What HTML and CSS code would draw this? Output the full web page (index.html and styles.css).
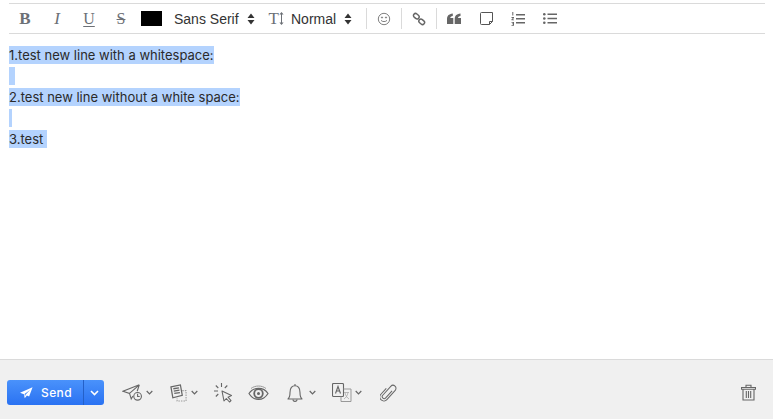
FILE: index.html
```html
<!DOCTYPE html>
<html lang="en">
<head>
    <meta charset="UTF-8">
    <meta name="viewport" content="width=device-width, initial-scale=1.0">
    <title>Compose</title>
    <link rel="stylesheet" href="styles.css">
</head>
<body>
    <div class="composer">
        <div class="toolbar">
            <span class="tool fmt bold">B</span>
            <span class="tool fmt italic">I</span>
            <span class="tool fmt underline">U</span>
            <span class="tool fmt strike">S</span>
            <span class="swatch"></span>
            <span class="picker font-picker">Sans Serif</span>
            <svg class="updown" width="8" height="12" viewBox="0 0 8 12"><path d="M4 0.5 7.5 5H.5zM4 11.500.5 7h7z"/></svg>
            <span class="size-icon">T<svg width="5" height="13" viewBox="0 0 5 13"><path d="M2.500 0 4.600 2.500H3V10.500H4.600L2.500 13 .4 10.500H2V2.500H.4z"/></svg></span>
            <span class="picker size-picker">Normal</span>
            <svg class="updown" width="8" height="12" viewBox="0 0 8 12"><path d="M4 0.5 7.5 5H.5zM4 11.500.5 7h7z"/></svg>

            <span class="sep first-sep"></span>
            <svg class="icon" width="14" height="14" viewBox="0 0 14 14" fill="none" stroke="#808080" stroke-width="1"><circle cx="7" cy="7" r="5.700"/><circle cx="5" cy="5.500" r=".6" fill="#777"/><circle cx="9" cy="5.500" r=".6" fill="#777"/><path d="M4 8.300c.8 1.700 5.200 1.700 6 0"/></svg>
            <span class="sep"></span>
            <svg class="icon" width="14" height="14" viewBox="-1 -1 16 16" fill="none" stroke="#666" stroke-width="1.700"><rect x=".4" y="1.400" width="7" height="4.800" rx="2.400" transform="rotate(40 3.900 3.800)"/><rect x="6.600" y="7.800" width="7" height="4.800" rx="2.400" transform="rotate(40 10.100 10.200)"/></svg>
            <span class="sep"></span>
            <svg class="icon" width="14" height="12" viewBox="0 0 14 12" fill="#666"><path d="M0 11V6.500C0 3 1.500 1.200 5.800.6V3C4.200 3.200 3.300 4 3.300 5H6.300V11zM7.700 11V6.500C7.700 3 9.200 1.200 13.500.6V3C11.900 3.200 11 4 11 5H14V11z"/></svg>
            <svg class="icon note" width="13" height="13" viewBox="0 0 13 13" fill="none" stroke="#555" stroke-width="1"><path d="M1.500.5H12.500V9.500L9.500 12.500H1.500A1 1 0 0 1 .5 11.500V1.500A1 1 0 0 1 1.500.5ZM12.500 9.500H9.500V12.500"/></svg>
            <svg class="icon list" width="14" height="14" viewBox="0 0 14 14" fill="#666"><path d="M5 2h9V3.500H5zM5 6h9V7.500H5zM5 10h9V11.500H5z"/><path d="M1.300 0h1v3.500h-1zM.5 5h2.500v1L1.500 7.500H3v.8H.5v-1L2 6H.5zM.5 10H3v3.800H.5V13H2v-.7H1v-.7h1v-.8H.5z"/></svg>
            <svg class="icon list" width="14" height="11" viewBox="0 0 14 11" fill="#666"><circle cx="1.300" cy="1.300" r="1.300"/><circle cx="1.300" cy="5.500" r="1.300"/><circle cx="1.300" cy="9.700" r="1.300"/><path d="M4.500.5H14V2H4.500zM4.500 4.700H14V6.200H4.500zM4.500 8.900H14V10.400H4.500z"/></svg>
        </div>

        <div class="editor">
            <span class="line">1.test new line with a whitespace:</span>
            <span class="line blank-wide"></span>
            <span class="line">2.test new line without a white space:</span>
            <span class="line blank-thin"></span>
            <span class="line">3.test&nbsp;</span>
        </div>

        <div class="footer">
            <div class="send-button">
                <span class="send-main">
                    <svg width="13" height="12" viewBox="0 0 15 13" fill="#fff"><path d="M14.500 0 0 6.300 4.500 8 5.500 12.500 8 9.300 10.500 10.500zM5.300 7.700 11.500 3 6.300 8.500 5.800 10.200z"/></svg>
                    Send
                </span>
                <span class="send-arrow">
                    <svg width="9" height="6" viewBox="0 0 9 6" fill="none" stroke="#fff" stroke-width="1.600"><path d="M1 1 4.500 4.500 8 1"/></svg>
                </span>
            </div>

            <div class="actions">
                <span class="action send-later">
                    <svg width="21" height="17" viewBox="0 0 24 20" fill="none" stroke="#666" stroke-width="1.300"><path d="M20 1 .8 8.500 8.500 11 10.500 17.500 12.500 14M20 1 8.500 11M20 1 17.500 8.500"/><circle cx="18" cy="14.500" r="4.500"/><path d="M18 11.500v3.200h2.500"/></svg>
                    <svg class="caret" width="7" height="5" viewBox="0 0 7 5"><path d="M.7 1 3.500 3.800 6.300 1"/></svg>
                </span>
                <span class="action templates">
                    <svg width="17" height="18" viewBox="0 0 18 19" fill="none" stroke="#666" stroke-width="1.300"><path d="M1 3 11 1 13 12 3 14.500z"/><path d="M3.500 5 9.500 4M4 7.500l6-1M4.500 10l6-1" stroke-width="1.400"/><path d="M13 7h4v11H7.500v-3" stroke="#999" stroke-width="1.100" stroke-dasharray="1.500 1.200"/></svg>
                    <svg class="caret" width="7" height="5" viewBox="0 0 7 5"><path d="M.7 1 3.500 3.800 6.300 1"/></svg>
                </span>
                <span class="action click-track">
                    <svg width="19" height="20" viewBox="0 0 19 20" fill="none" stroke="#666" stroke-width="1.100"><path d="M8 8 10 18 12.300 15.500 15.500 19 17 17.500 14 14.200 17.500 12.500z" stroke-linejoin="round"/><path d="M7.500 0V4M1.800 2.500 4.300 5M0 8H4M1.800 13.500 4.300 11M13.300 2.500 10.800 5"/></svg>
                </span>
                <span class="action read-track">
                    <svg width="21" height="16" viewBox="0 0 21 16" fill="none" stroke="#666"><path d="M1 8.500C3.500 4.500 7 3.300 10.500 3.300S17.500 4.500 20 8.500C17.500 12.500 14 14.500 10.500 14.500S3.500 12.500 1 8.500Z" stroke-width="1.200"/><circle cx="10.500" cy="8.500" r="4.300" stroke-width="1.800"/><circle cx="10.500" cy="8.500" r="1.500" fill="#666" stroke="none"/><path d="M3 3.500C7 .2 14 .2 18 3.500" stroke="#999" stroke-width="1"/></svg>
                </span>
                <span class="action reminder">
                    <svg width="16" height="20" viewBox="0 0 16 20" fill="none" stroke="#666" stroke-width="1.100"><path d="M1 16c1.700-1.500 2-3 2-6.500C3 5 5 2.800 8 2.800S13 5 13 9.500C13 13 13.300 14.500 15 16z" stroke-linejoin="round"/><path d="M8 1V2.800M6 16.500C6 19 10 19 10 16.500"/></svg>
                    <svg class="caret" width="7" height="5" viewBox="0 0 7 5"><path d="M.7 1 3.500 3.800 6.300 1"/></svg>
                </span>
                <span class="action translate">
                    <svg width="20" height="20" viewBox="0 0 20 20" fill="none" stroke="#666" stroke-width="1.100"><rect x=".5" y=".5" width="11" height="13" rx="1"/><path d="M3.500 10.500 6 3.500 8.500 10.500M4.500 8H7.500"/><path d="M11.500 6H19V18.500H9V13.500" stroke="#999" stroke-width="1"/><path d="M12 9.500H17M13 9.500C13.500 13 15.500 15 17 16M16 9.500C15.500 13 13.500 15 12 16" stroke="#aaa" stroke-width=".8"/></svg>
                    <svg class="caret" width="7" height="5" viewBox="0 0 7 5"><path d="M.7 1 3.500 3.800 6.300 1"/></svg>
                </span>
                <span class="action attach">
                    <svg width="17" height="18" viewBox="-8.500 -9 17 18" fill="none" stroke="#666" stroke-width="1"><path transform="rotate(42)" d="M1.200 -4V5.500A2 2 0 0 1 -2.800 5.500V-6.500A3 3 0 0 1 3.200 -6.500V6A4 4 0 0 1 -4.800 6V-2"/></svg>
                </span>
            </div>

            <svg class="trash" width="15" height="17" viewBox="0 0 15 17" fill="none" stroke="#666"><path d="M.5 3.500H14.500V5.300H.5zM5 3.500V1.200H10V3.500M2 5.300V16H13V5.300" stroke-width="1.100"/><path d="M5.300 7V14M7.500 7V14M9.700 7V14" stroke-width="1.100"/></svg>
        </div>
    </div>
</body>
</html>
```

FILE: styles.css
```css
html, body {
    margin: 0;
    padding: 0;
    height: 100%;
    background: #FFFFFF;
}

.composer {
    display: flex;
    flex-direction: column;
    height: 419px;
    overflow: hidden;
}

.toolbar {
    display: flex;
    align-items: center;
    height: 29px;
    margin: 3px 8px 0 9px;
    border-top: 1px solid #DADADA;
    border-bottom: 1px solid #DADADA;
}

.tool {
    width: 32px;
    text-align: center;
    flex: none;
    color: #6C7076;
    font-family: "Liberation Serif", serif;
    font-size: 16px;
}

.fmt.bold {
    font-size: 17px;
    font-weight: bold;
}

.fmt.italic {
    font-size: 17px;
    font-style: italic;
}

.fmt.underline {
    text-decoration: underline;
    text-underline-offset: 2px;
}

.fmt.strike {
    text-decoration: line-through;
}

.swatch {
    width: 21px;
    height: 15px;
    margin-left: 4px;
    background: #000000;
}

.picker {
    font-family: "Liberation Sans", sans-serif;
    font-size: 14px;
    color: #333333;
}

.font-picker {
    margin-left: 12px;
}

.updown {
    margin-left: 8px;
    fill: #333333;
}

.size-icon {
    display: flex;
    align-items: center;
    margin-left: 14px;
    font-family: "Liberation Serif", serif;
    font-size: 17px;
    color: #6C7076;
}

.size-icon svg {
    fill: #6C7076;
}

.size-picker {
    margin-left: 7px;
}

.sep {
    width: 1px;
    height: 21px;
    margin: 0 10px;
    background: #DADADA;
}

.icon {
    flex: none;
}

.sep.first-sep {
    margin-left: 14px;
}

.icon.note {
    margin-left: 19px;
}

.icon.list {
    margin-left: 18px;
}

.editor {
    flex: 1;
    display: flex;
    flex-direction: column;
    align-items: flex-start;
    gap: 3px;
    padding: 12px 0 0 9px;
    font-family: Inter, sans-serif;
    font-size: 13px;
    line-height: 18px;
    color: #2A2A2A;
}

.line {
    display: block;
    min-height: 18px;
    background: #B4D3FE;
    white-space: pre;
}

.blank-wide {
    width: 6px;
}

.blank-thin {
    width: 3px;
}

.footer {
    display: flex;
    align-items: center;
    height: 60px;
    padding: 6px 17px 0 7px;
    background: #F0F0F0;
    border-top: 1px solid #DADADA;
    box-sizing: border-box;
}

.send-button {
    display: flex;
    width: 97px;
    height: 25px;
    border-radius: 3px;
    background: linear-gradient(#4A92FB, #2A72F2);
    color: #FFFFFF;
    font-family: Inter, sans-serif;
    font-size: 12px;
    font-weight: 500;
}

.send-main {
    flex: 1;
    display: flex;
    align-items: center;
    gap: 8px;
    padding-left: 13px;
    letter-spacing: .4px;
}

.send-arrow {
    width: 20px;
    display: flex;
    align-items: center;
    justify-content: center;
    border-left: 1px solid #2460C8;
}

.actions {
    display: flex;
    align-items: center;
    flex: 1;
    margin-left: 18px;
}

.action {
    display: flex;
    align-items: center;
    gap: 3px;
}

.send-later {
    margin-right: 17px;
}

.templates {
    gap: 4px;
    margin-right: 16px;
}

.click-track {
    margin-right: 15px;
}

.read-track {
    margin-right: 18px;
}

.reminder {
    gap: 6px;
    margin-right: 16px;
}

.translate {
    margin-right: 18px;
}

.caret {
    fill: none;
    stroke: #666666;
    stroke-width: 1.2;
}

.trash {
    flex: none;
}
```
